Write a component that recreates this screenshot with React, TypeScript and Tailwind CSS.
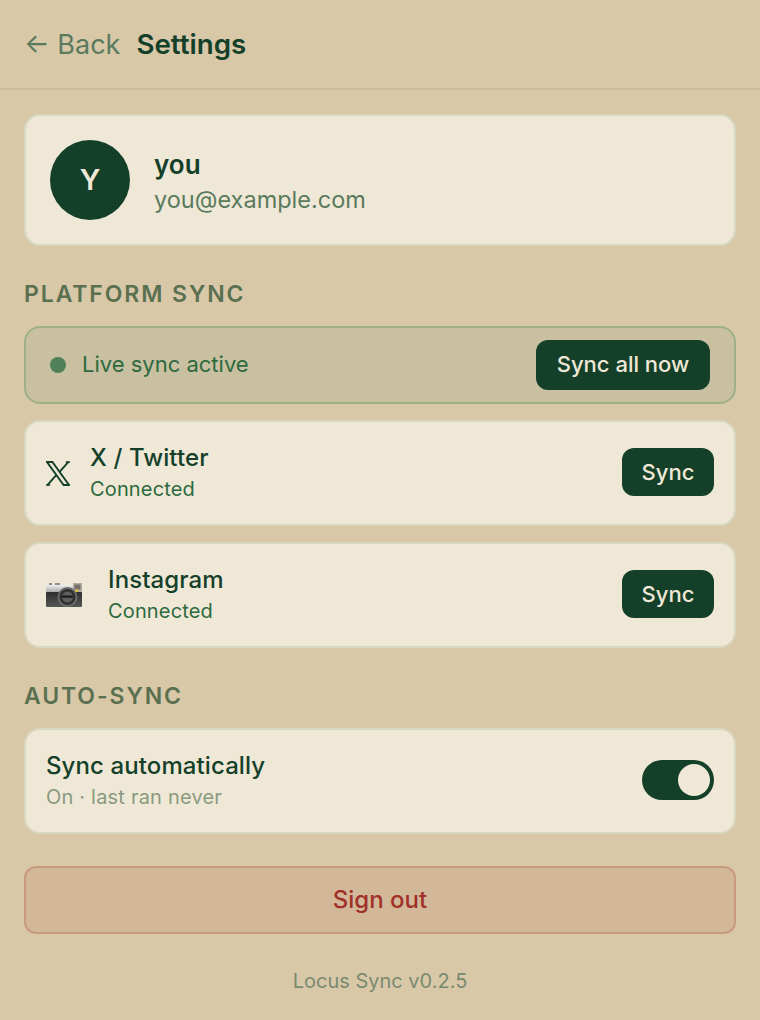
function XLogo() {
  return (
    <svg viewBox="0 0 24 25" className="w-[24px] h-[25px] shrink-0 text-[#14402a]" fill="none" stroke="currentColor" strokeWidth="1.9">
      <path d="M1 1 H6.4 L23 24 H17.6 Z" />
      <path d="M22.4 0.8 L13.6 10.8 M10.2 14.2 L1.4 24.2" />
      <path d="M0 24 H4.2 M0 1 H2 M19.8 1 H24" strokeWidth="1.4" />
    </svg>
  );
}

function Camera() {
  return (
    <svg viewBox="0 0 36 24" className="w-[36px] h-[24px] shrink-0">
      <defs>
        <linearGradient id="silver" x1="0" y1="0" x2="0" y2="1">
          <stop offset="0" stopColor="#eeeeee" />
          <stop offset="1" stopColor="#a0a0a0" />
        </linearGradient>
        <linearGradient id="body" x1="0" y1="0" x2="0" y2="1">
          <stop offset="0" stopColor="#2e2e2e" />
          <stop offset="1" stopColor="#565656" />
        </linearGradient>
      </defs>
      <rect x="3" y="0" width="3" height="3" fill="#8f8f8f" />
      <rect x="9" y="0" width="5" height="3" fill="#8f8f8f" />
      <rect x="0" y="2" width="36" height="8" rx="1" fill="url(#silver)" />
      <rect x="0" y="9" width="36" height="15" rx="1" fill="url(#body)" />
      <rect x="27" y="0" width="9" height="8" fill="#b0aca2" />
      <rect x="28.5" y="1.5" width="6" height="5" fill="#77716a" />
      <circle cx="21.5" cy="14" r="10" fill="#6b6b6b" />
      <circle cx="21.5" cy="14" r="8" fill="#2f2f2f" />
      <circle cx="21.5" cy="14" r="5.5" fill="#5e5e5e" />
      <rect x="16" y="12.6" width="11" height="2.2" rx="1" fill="#1c1c1c" />
      <circle cx="30.7" cy="7.7" r="1.4" fill="#e8c020" />
    </svg>
  );
}

function SyncButton() {
  return (
    <button className="w-[92px] h-[48px] rounded-[12px] bg-[#14402a] text-[#efe8d6] text-[22px] font-medium">
      Sync
    </button>
  );
}

function Heading({ children }: { children: string }) {
  return (
    <h2 className="text-[23px] leading-[28px] font-semibold tracking-[1.9px] text-[#5a7050]">{children}</h2>
  );
}

export default function App() {
  return (
    <div
      className="w-[760px] h-[1020px] overflow-hidden bg-[#d8c8a8] text-[#14402a]"
      style={{ fontFamily: "Inter, 'Liberation Sans', sans-serif" }}
    >
      <header className="h-[90px] border-b-2 border-[#cbbd9d] pl-[24px] pt-[1px] flex items-center gap-[16px]">
        <div className="text-[#5a7a5e] text-[27px] pt-[2px]">← Back</div>
        <h1 className="text-[27.7px] font-semibold">Settings</h1>
      </header>

      <main className="px-[24px] pt-[24px]">
        <section className="h-[132px] rounded-[16px] border-2 border-[#d8d8c0] bg-[#efe8d6] flex items-center px-[24px] gap-[24px]">
          <div className="w-[80px] h-[80px] rounded-full bg-[#14402a] text-[#efe8d6] flex items-center justify-center text-[29px] font-semibold">
            Y
          </div>
          <div className="pt-[4px]">
            <div className="text-[26px] leading-[34px] font-semibold">you</div>
            <div className="text-[23.5px] leading-[35px] text-[#5a7a5e]">you@example.com</div>
          </div>
        </section>

        <div className="mt-[34px] mb-[18px]">
          <Heading>PLATFORM SYNC</Heading>
        </div>

        <section className="h-[78px] rounded-[16px] border-2 border-[#9fb088] bg-[#c8c0a0] flex items-center justify-between pl-[24px] pr-[24px]">
          <div className="flex items-center gap-[16px]">
            <span className="w-[16px] h-[16px] rounded-full bg-[#4f8058]" />
            <span className="text-[22px] leading-[24px] pb-[2px] text-[#2d6a3f]">Live sync active</span>
          </div>
          <button className="w-[174px] h-[50px] rounded-[12px] bg-[#14402a] text-[#efe8d6] text-[22px] leading-[24px] pb-[2px] font-medium">
            Sync all now
          </button>
        </section>

        <section className="mt-[16px] h-[106px] rounded-[16px] border-2 border-[#d8d8c0] bg-[#efe8d6] flex items-center justify-between pl-[20px] pr-[20px]">
          <div className="flex items-center gap-[20px]">
            <XLogo />
            <div>
              <div className="text-[24px] leading-[32px] tracking-[0.1px] font-medium">X / Twitter</div>
              <div className="text-[20px] leading-[30px] tracking-[0.15px] text-[#2d6a3f]">Connected</div>
            </div>
          </div>
          <div className="pb-[2px]">
            <SyncButton />
          </div>
        </section>

        <section className="mt-[16px] h-[106px] rounded-[16px] border-2 border-[#d8d8c0] bg-[#efe8d6] flex items-center justify-between pl-[20px] pr-[20px]">
          <div className="flex items-center gap-[26px]">
            <Camera />
            <div>
              <div className="text-[24px] leading-[32px] tracking-[0.1px] font-medium">Instagram</div>
              <div className="text-[20px] leading-[30px] tracking-[0.15px] text-[#2d6a3f]">Connected</div>
            </div>
          </div>
          <div className="pb-[2px]">
            <SyncButton />
          </div>
        </section>

        <div className="mt-[34px] mb-[18px]">
          <Heading>AUTO-SYNC</Heading>
        </div>

        <section className="h-[106px] rounded-[16px] border-2 border-[#d8d8c0] bg-[#efe8d6] flex items-center justify-between pl-[20px] pr-[20px]">
          <div>
            <div className="text-[24px] leading-[32px] tracking-[0.1px] font-medium">Sync automatically</div>
            <div className="text-[20px] leading-[30px] tracking-[0.2px] text-[#8a9a80]">On · last ran never</div>
          </div>
          <div className="w-[72px] h-[40px] mb-[2px] rounded-full bg-[#14402a] flex items-center justify-end pr-[4px]">
            <span className="w-[32px] h-[32px] rounded-full bg-[#efe8d6]" />
          </div>
        </section>

        <button className="mt-[32px] w-full h-[68px] rounded-[12px] border-2 border-[#c89a80] bg-[#d2b898] text-[#a03028] text-[24px] font-medium">
          Sign out
        </button>

        <div className="mt-[32px] text-center text-[20px] leading-[30px] text-[#7a8a70]">Locus Sync v0.2.5</div>
      </main>
    </div>
  );
}
